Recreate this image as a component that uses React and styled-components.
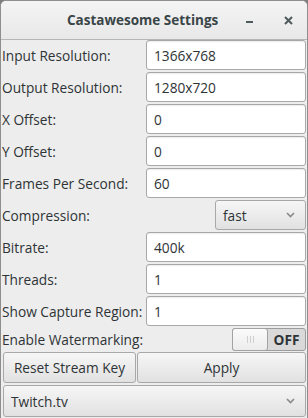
import React from "react";
import styled, { createGlobalStyle } from "styled-components";

const GlobalStyle = createGlobalStyle`
  html, body {
    margin: 0;
    padding: 0;
    background: #7d7d7d;
  }
  body {
    font-family: "Open Sans", "DejaVu Sans", sans-serif;
    font-size: 13.7px;
    color: #2e3436;
  }
`;

const Window = styled.div`
  width: 306px;
  height: 417px;
  border: 1px solid #8e8e8e;
  border-bottom: none;
  border-radius: 6px 6px 0 0;
  background: #ededed;
  display: flex;
  flex-direction: column;
  overflow: hidden;
`;

const TitleBar = styled.div`
  height: 38px;
  border-bottom: 1px solid #b6b6b6;
  background: linear-gradient(#f4f4f4, #e8e8e8);
  display: grid;
  grid-template-columns: 1fr 38px 38px;
  align-items: center;
`;

const Title = styled.div`
  font-weight: bold;
  font-size: 13.5px;
  text-align: center;
  padding-left: 66px;
  color: #3a4548;
  text-align: left;
`;

const TitleButton = styled.div`
  display: flex;
  align-items: center;
  justify-content: center;
  height: 38px;
`;

const Content = styled.div`
  display: flex;
  flex-direction: column;
  gap: 2px;
  padding: 0 1px;
`;

const Row = styled.div`
  display: flex;
  align-items: center;
  height: ${(p) => p.h || 30}px;
`;

const Label = styled.div`
  flex: 1;
  padding-left: 0;
  white-space: nowrap;
`;

const Entry = styled.div`
  box-sizing: border-box;
  width: 160px;
  height: 30px;
  background: #ffffff;
  border: 1px solid #a8a8a8;
  border-radius: 3px;
  box-shadow: inset 0 1px 1px rgba(0, 0, 0, 0.08);
  padding: 0 7px;
  display: flex;
  align-items: center;
`;

const Button = styled.div`
  box-sizing: border-box;
  height: ${(p) => p.h || 31}px;
  border: 1px solid #a8a8a8;
  border-radius: 3px;
  background: linear-gradient(#f6f6f6, #e1e1e1);
  display: flex;
  align-items: center;
  justify-content: ${(p) => (p.combo ? "space-between" : "center")};
  padding: 0 ${(p) => (p.combo ? "10px 0 7px" : "6px")};
  flex: ${(p) => p.grow || "none"};
  width: ${(p) => (p.w ? p.w + "px" : "auto")};
`;

const ButtonRow = styled.div`
  display: flex;
  gap: 1px;
  padding-left: 1px;
`;

const Switch = styled.div`
  box-sizing: border-box;
  width: 74px;
  height: 23px;
  border: 1px solid #9c9c9c;
  border-radius: 3px;
  background: #d9d9d9;
  display: flex;
  align-items: stretch;
`;

const Slider = styled.div`
  box-sizing: border-box;
  width: 36px;
  margin: -1px 0 -1px -1px;
  border: 1px solid #a3a3a3;
  border-radius: 3px;
  background: linear-gradient(#fbfbfb, #ececec);
  display: flex;
  align-items: center;
  justify-content: center;
  gap: 2px;
`;

const Grip = styled.span`
  width: 1px;
  height: 7px;
  background: #cfcfcf;
`;

const SwitchText = styled.div`
  flex: 1;
  display: flex;
  align-items: center;
  justify-content: center;
  font-weight: bold;
  color: #2e3436;
`;

const Chevron = () => (
  <svg width="9" height="6" viewBox="0 0 9 6">
    <path d="M1 1 L4.5 4.5 L8 1" stroke="#8a8a8a" strokeWidth="1.6" fill="none" />
  </svg>
);

const fields = [
  ["Input Resolution:", "1366x768"],
  ["Output Resolution:", "1280x720"],
  ["X Offset:", "0"],
  ["Y Offset:", "0"],
  ["Frames Per Second:", "60"],
];

const fields2 = [
  ["Bitrate:", "400k"],
  ["Threads:", "1"],
  ["Show Capture Region:", "1"],
];

export default function App() {
  return (
    <>
      <GlobalStyle />
      <Window>
        <TitleBar>
          <Title>Castawesome Settings</Title>
          <TitleButton>
            <svg width="8" height="4" viewBox="0 0 8 4" style={{ marginTop: 6 }}>
              <rect x="0" y="0" width="7" height="2" fill="#4f5a5c" />
            </svg>
          </TitleButton>
          <TitleButton>
            <svg width="9" height="9" viewBox="0 0 9 9">
              <path d="M1 1 L8 8 M8 1 L1 8" stroke="#4f5a5c" strokeWidth="2" />
            </svg>
          </TitleButton>
        </TitleBar>
        <Content>
          {fields.map(([l, v]) => (
            <Row key={l}>
              <Label>{l}</Label>
              <Entry>{v}</Entry>
            </Row>
          ))}
          <Row>
            <Label>Compression:</Label>
            <Button combo w={91} h={30}>
              fast
              <Chevron />
            </Button>
          </Row>
          {fields2.map(([l, v]) => (
            <Row key={l}>
              <Label>{l}</Label>
              <Entry>{v}</Entry>
            </Row>
          ))}
          <Row h={22}>
            <Label>Enable Watermarking:</Label>
            <Switch>
              <Slider>
                <Grip />
                <Grip />
                <Grip />
              </Slider>
              <SwitchText>OFF</SwitchText>
            </Switch>
          </Row>
          <ButtonRow>
            <Button w={133}>Reset Stream Key</Button>
            <Button grow="1">Apply</Button>
          </ButtonRow>
          <ButtonRow>
            <Button combo grow="1" h={32}>
              Twitch.tv
              <Chevron />
            </Button>
          </ButtonRow>
        </Content>
      </Window>
    </>
  );
}
